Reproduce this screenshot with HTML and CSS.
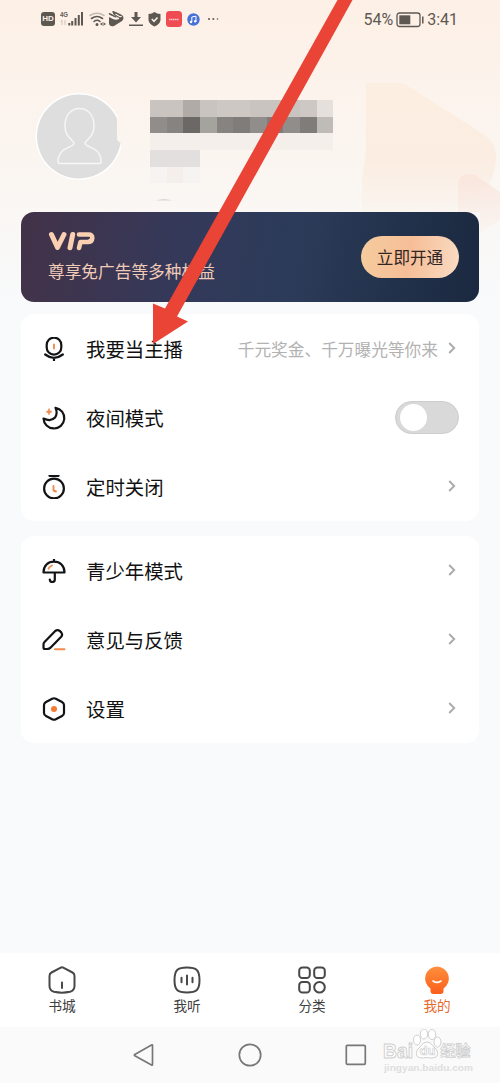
FILE: index.html
```html
<!DOCTYPE html>
<html lang="zh-CN">
<head>
<meta charset="utf-8">
<meta name="viewport" content="width=device-width, initial-scale=1">
<title>我的</title>
<link rel="stylesheet" href="styles.css">
</head>
<body>
<div class="screen">
  <svg class="decor" width="140" height="260" viewBox="360 70 140 260">
    <defs>
      <linearGradient id="peach" x1="0" y1="0" x2="0" y2="1"><stop offset="0" stop-color="#fceee1"/><stop offset=".6" stop-color="#fbede1"/><stop offset="1" stop-color="#faf5f0"/></linearGradient>
      <linearGradient id="rose" x1="0" y1="0" x2="0" y2="1"><stop offset="0" stop-color="#f9e3da"/><stop offset="1" stop-color="#faf3ef"/></linearGradient>
    </defs>
    <path fill="url(#peach)" d="M366 83H398Q403 83 408 86L483 134Q497 143 496 160Q494 180 484 191L452 212H362V182L366 150Z"/>
    <path fill="url(#rose)" opacity=".8" d="M458 203V185Q458 175 468 174Q474 174 478 177L500 192V220L480 232V212H458Z"/>
  </svg>

  <header class="status">
    <div class="status-icons">
      <span class="hd">HD</span>
      <svg width="24" height="18" viewBox="0 0 24 18"><text class="net" x="0" y="7" textLength="8" lengthAdjust="spacingAndGlyphs">4G</text><path d="M2 10v5M0.8 11.5L2 10M5 10v5" stroke="#cfc5bd" fill="none"/><path d="M9.3 13v2.500M12.200 11v4.500M15.500 8v7.500M18.800 5v10.500M22 2v13.500" stroke="#5e5852" stroke-width="2"/></svg>
      <svg width="17" height="16" viewBox="0 0 17 16" fill="none" stroke="#5e5852" stroke-width="1.600" stroke-linecap="round"><path stroke="#c3bbb3" d="M1 4.500Q8 0 15 4.500"/><path d="M2.500 7.500Q8 3.500 13.500 7.500M5 10.500Q8 8 11 10.500"/><circle cx="8" cy="13.500" r=".7"/><path d="M12 13h4M13 11.800L11.800 13 13 14.200M15 11.800L16.200 13 15 14.200" stroke-width="1"/></svg>
      <svg class="clip" width="16" height="16" viewBox="0 0 16 16"><path fill="#5e5852" d="M1 6L5 8Q9 9.500 11 7.500L5 3Q5 0 8 1L14 4Q17 7 14 10L6 15Q2 16 1 13Z"/><path d="M1.500 2.800L7.500 6M5 .8L11 4.500" stroke="#5e5852" fill="none" stroke-width="1.600" stroke-linecap="round"/><path d="M3.500 5.500L8 7.600Q10 8 11 7M7.500 3L11.500 5.500Q13 6 13.500 5" stroke="#fcf1e9" fill="none" stroke-width="1.100"/></svg>
      <svg width="14" height="16" viewBox="0 0 14 16"><path fill="#5e5852" d="M5.500 1h3v5h3.500L7 11.500 2 6h3.500zM0 13.500h14V15H0z"/></svg>
      <svg width="13" height="15" viewBox="0 0 13 15"><path fill="#5e5852" d="M6.500 0Q9 2 12.500 2V8Q12 12 6.500 14.500Q1 12 .5 8V2Q4 2 6.500 0Z"/><path d="M3.800 7l2.200 2.300L9.500 5.500" stroke="#fcf1e9" stroke-width="1.500" fill="none"/></svg>
      <svg width="16" height="16" viewBox="0 0 16 16"><rect width="16" height="16" rx="3.500" fill="#ee4b53"/><path d="M3 8.500h10" stroke="#fac4c4" stroke-width="1.500" stroke-dasharray="1.500 .4"/></svg>
      <svg width="13" height="13" viewBox="0 0 13 13"><circle cx="6.500" cy="6.500" r="6.200" fill="#4872d6"/><path d="M4.800 9V4L9 3.200V8" stroke="#fff" fill="none"/><circle cx="4" cy="9" r="1.200" fill="#fff"/><circle cx="8.200" cy="8.200" r="1.200" fill="#fff"/></svg>
      <svg class="more" width="12" height="4" viewBox="0 0 12 4" fill="#5e5852"><circle cx="2" cy="2" r="1"/><circle cx="6.300" cy="2" r="1"/><circle cx="10.500" cy="2" r=".8"/></svg>
    </div>
    <div class="status-right">
      <span>54%</span>
      <svg width="28" height="16" viewBox="0 0 28 16"><rect x="1" y="1" width="23" height="13.500" rx="2.500" fill="none" stroke="#5e5852" stroke-width="1.300"/><rect x="3.300" y="3.300" width="11" height="9" fill="#5e5852"/><path d="M26.800 4.500v7" stroke="#5e5852" stroke-width="1.500"/></svg>
      <span>3:41</span>
    </div>
  </header>

  <section class="profile">
    <svg class="avatar" width="90" height="90" viewBox="0 0 90 90"><path d="M82.500 24A43.500 43.500 0 1 0 86.500 54L82 48Z" fill="#fff"/><path d="M82 26.500A42 42 0 1 0 85.500 51L82 48Z" fill="#dedede"/><path fill="none" stroke="#f6f6f6" stroke-width="1.500" stroke-linejoin="round" d="M39 51C36 46 30 44 30 34C30 23 36 16.500 44.500 16.500S59 23 59 34C59 44 53 46 50 51C50 56 66 54 66 70Q66 71.500 64 71.500H25Q23 71.500 23 70C23 54 40 56 39 51Z"/></svg>
    <div class="mosaic">
      <i class="a"></i><i class="a"></i><i class="b"></i><i class="a"></i><i class="c"></i><i class="c"></i><i class="a"></i><i class="a"></i><i class="a"></i><i class="c"></i><i class="l"></i>
      <i class="d"></i><i class="e"></i><i class="f"></i><i class="g"></i><i class="e"></i><i class="h"></i><i class="d"></i><i class="h"></i><i class="d"></i><i class="h"></i><i class="i"></i>
      <i class="j"></i><i class="j"></i><i class="j"></i><i class="j"></i><i class="j"></i><i class="j"></i><i class="j"></i><i class="j"></i><i class="j"></i><i class="j"></i><i class="j"></i>
      <i class="k"></i><i class="k"></i><i class="k"></i><i></i><i></i><i></i><i></i><i></i><i></i><i></i><i></i>
      <i class="m"></i><i class="j"></i><i class="m"></i>
    </div>
    <svg class="trace" width="16" height="3" viewBox="0 0 16 3"><path d="M0 2.500Q8 -.5 16 2.500Z" fill="#d9d5d1"/></svg>
  </section>

  <section class="vip">
    <div class="vip-info">
      <svg width="50" height="22" viewBox="0 0 50 22" role="img" aria-label="VIP" fill="none" stroke="#fbd0b2" stroke-width="5" stroke-linecap="round" stroke-linejoin="round"><path d="M3.500 4.500L9.500 17.500 16 4.500M24.700 4.500L22 17.800"/><path d="M31 4.500H40.500Q44.500 4.500 44.300 8Q44 12 39.500 12H32.500L31 18" stroke-width="4.600"/></svg>
      <p>尊享免广告等多种权益</p>
    </div>
    <button class="open">立即开通</button>
  </section>

  <section class="card">
    <div class="row">
      <svg class="icon" viewBox="0 0 24 24"><rect x="4.700" y=".7" width="14.600" height="17" rx="7.200"/><path d="M3.200 17.500Q12 24.200 20.800 17.500M12 20.800V23.500"/><path class="o" d="M12 7.500v4"/></svg>
      <span class="label">我要当主播</span><span class="hint">千元奖金、千万曝光等你来</span>
      <svg class="chev" viewBox="0 0 8 12"><path d="M1.200 1L6.200 6 1.200 11"/></svg>
    </div>
    <div class="row">
      <svg class="icon" viewBox="0 0 24 24"><path d="M13.500 1.800A10.400 10.400 0 1 1 1.500 12.500Q9 16 13 11.500Q16 7.500 13.500 1.800Z"/><path class="o star" d="M7 2.800Q7.400 5.400 10 5.800Q7.400 6.200 7 8.800Q6.600 6.200 4 5.800Q6.600 5.400 7 2.800Z"/></svg>
      <span class="label">夜间模式</span><span class="switch"><span></span></span>
    </div>
    <div class="row">
      <svg class="icon" viewBox="0 0 24 24"><circle cx="12" cy="13.500" r="9.900"/><path d="M7.500 .8h9"/><path class="o" d="M11.500 11v4.500L14 16.500"/></svg>
      <span class="label">定时关闭</span>
      <svg class="chev" viewBox="0 0 8 12"><path d="M1.200 1L6.200 6 1.200 11"/></svg>
    </div>
  </section>

  <section class="card">
    <div class="row">
      <svg class="icon" viewBox="0 0 24 24"><path d="M1.500 13.500C1.500 6.500 6 2.700 12 2.700S22.500 6.500 22.500 13.500ZM12 .3V2.500M12.800 14V20.500Q12.800 23 10.300 23Q7.800 23 7.800 20.500"/><path class="o" d="M6.500 9.800Q7 7.800 10 6.500"/></svg>
      <span class="label">青少年模式</span>
      <svg class="chev" viewBox="0 0 8 12"><path d="M1.200 1L6.200 6 1.200 11"/></svg>
    </div>
    <div class="row">
      <svg class="icon" viewBox="0 0 24 24"><path d="M2.500 14L13 3.200Q15.500 1 17.700 2.900L19.200 4.400Q21 6.500 19.200 8.700L8.700 19.500Q7.500 21 5 21H3Q1.500 21 1.500 19.500V16.500Q1.500 15 2.500 14Z"/><path class="o" d="M13 21.300h9.500"/></svg>
      <span class="label">意见与反馈</span>
      <svg class="chev" viewBox="0 0 8 12"><path d="M1.200 1L6.200 6 1.200 11"/></svg>
    </div>
    <div class="row">
      <svg class="icon" viewBox="0 0 24 24"><path d="M10.200 1.700Q12 .8 13.800 1.700L20 5Q22 6.100 22 8V16Q22 17.900 20 19L13.800 22.300Q12 23.200 10.200 22.300L4 19Q2 17.900 2 16V8Q2 6.100 4 5Z"/><circle class="dot" cx="12" cy="12" r="3"/></svg>
      <span class="label">设置</span>
      <svg class="chev" viewBox="0 0 8 12"><path d="M1.200 1L6.200 6 1.200 11"/></svg>
    </div>
  </section>

  <nav class="tabs">
    <a class="tab"><svg viewBox="0 0 28 28"><path d="M12.300 1.800Q14 .9 15.700 1.800L24.500 6.500Q26.500 7.600 26.500 10V20Q26.500 24.500 22 25.800Q14 27.500 6 25.800Q1.500 24.500 1.500 20V10Q1.500 7.600 3.500 6.500ZM14 16.500v5.500"/></svg>书城</a>
    <a class="tab"><svg viewBox="0 0 28 28"><path d="M14 1.500C23.500 1.500 26.500 4 26.500 14S23.500 26.500 14 26.500 1.500 24 1.500 14 4.500 1.500 14 1.500ZM8.500 11.800v4.500M14 9.500v9M19.500 11.800v4.500"/></svg>我听</a>
    <a class="tab"><svg viewBox="0 0 28 28"><rect x="1.200" y="1.500" width="10.600" height="10.600" rx="3.200"/><rect x="16.200" y="1.500" width="10.600" height="10.600" rx="3.200"/><rect x="1.200" y="16" width="10.600" height="10.600" rx="3.200"/><circle cx="21.500" cy="21.300" r="5.300"/></svg>分类</a>
    <a class="tab active"><svg viewBox="0 0 28 28"><defs><linearGradient id="face" x1="0" y1="0" x2="0" y2="1"><stop offset="0" stop-color="#ff8f3c"/><stop offset="1" stop-color="#fb5e1c"/></linearGradient></defs><path class="face" d="M14 .500A12 12 0 0 1 20.500 22.500V25Q20.500 28 17.500 28H10.500Q7.500 28 7.500 25V22.500A12 12 0 0 1 14 .500Z"/><path class="smile" d="M10 15Q14 17.800 18 15"/></svg>我的</a>
  </nav>

  <footer class="sysnav">
    <svg viewBox="0 0 24 24"><path d="M20.500 2.500V21.500Q20.500 22.500 19.500 22L2.800 12.700Q1.800 12 2.800 11.400L19.500 2Q20.500 1.500 20.500 2.500Z"/></svg>
    <svg viewBox="0 0 24 24"><circle cx="12" cy="12" r="10.700"/></svg>
    <svg viewBox="0 0 24 24"><rect x="2.300" y="2.300" width="19" height="19" rx="1"/></svg>
  </footer>

  <svg class="watermark" width="100" height="50" viewBox="0 0 100 50">
    <g fill="#fff" stroke="#cfcfcf" stroke-width="1">
      <text x="2" y="28.500" class="wm-big" textLength="30" lengthAdjust="spacingAndGlyphs">Bai</text>
      <ellipse cx="36" cy="11" rx="3.500" ry="5"/><ellipse cx="43" cy="5" rx="3.700" ry="5"/><ellipse cx="51" cy="5.500" rx="3.700" ry="5"/><ellipse cx="56.500" cy="13" rx="3.500" ry="5"/>
      <path d="M46 13Q50 13 53 18Q58 22 56 27Q53 30 46 28.500Q38 30 36 27Q34 22 39 18Q42 13 46 13Z"/>
      <text x="38.500" y="26" class="wm-du">du</text>
      <text x="59.500" y="27" class="wm-cn">经验</text>
    </g>
    <text x="3" y="41.500" class="wm-url" textLength="89" lengthAdjust="spacingAndGlyphs">jingyan.baidu.com</text>
  </svg>

  <svg class="arrow" width="500" height="360" viewBox="0 0 500 360"><path fill="#e94436" d="M337.500 0H352.500L177 316.500 188 321.500 153 344V303.500L165 308.500Z"/></svg>
</div>
</body>
</html>
```
FILE: styles.css
```css
* { box-sizing: border-box; }
body {
  margin: 0;
  font-family: "Liberation Sans", "Noto Sans CJK SC", sans-serif;
}
.screen {
  position: relative;
  width: 500px;
  height: 1083px;
  overflow: hidden;
  display: flex;
  flex-direction: column;
  background: linear-gradient(#fdf0e6 0, #fcf3ec 90px, #faf7f4 212px, #f8fafc 310px, #f8fafc 100%);
}
.screen svg { flex: none; display: block; }
.decor { position: absolute; right: 0; top: 70px; }
.status, .profile, .vip, .card { position: relative; }

.status {
  height: 38px;
  padding: 0 42px 0 41px;
  display: flex;
  align-items: center;
  justify-content: space-between;
  color: #5e5852;
}
.status-icons { display: flex; align-items: center; gap: 5px; }
.status-icons .clip { margin-left: -3px; }
.status-icons .more { margin-left: 2px; }
.hd {
  width: 14px;
  height: 14px;
  border-radius: 3px;
  background: #5e5852;
  color: #fcf1e9;
  font: bold 8px/14px "Liberation Sans", sans-serif;
  text-align: center;
}
.net { font: bold 7px "Liberation Sans", sans-serif; fill: #5e5852; }
.status-right {
  display: flex;
  align-items: center;
  gap: 3px;
  padding-top: 1px;
  font: 16px/20px Roboto, sans-serif;
}

.profile {
  height: 174px;
  display: flex;
  align-items: flex-start;
  padding: 54px 0 0 35px;
}
.mosaic {
  display: grid;
  grid-template-columns: repeat(11, 16.67px);
  grid-auto-rows: 16.67px;
  margin: 8px 0 0 25px;
}
.mosaic .a { background: #c9c4bf; }
.mosaic .b { background: #b0aba7; }
.mosaic .c { background: #cdc8c4; }
.mosaic .d { background: #918d8a; }
.mosaic .e { background: #868380; }
.mosaic .f { background: #6b6866; }
.mosaic .g { background: #a5a39e; }
.mosaic .h { background: #7f7c79; }
.mosaic .i { background: #bfbbb7; }
.mosaic .j { background: #f4efeb; }
.mosaic .k { background: #e3dfde; }
.mosaic .l { background: #e5e0dc; }
.mosaic .m { background: #f7f3f0; }
.trace { position: absolute; left: 156px; top: 160px; }

.vip {
  height: 90px;
  margin: 0 21px;
  padding: 0 21px 0 27px;
  border-radius: 13px;
  display: flex;
  justify-content: space-between;
  align-items: center;
  background: linear-gradient(100deg, #433248 0%, #34395a 36%, #2b3b59 60%, #1a293f 100%);
}
.vip-info { display: flex; flex-direction: column; gap: 9px; padding-top: 1px; }
.vip p { margin: 0; font-size: 16.700px; line-height: 24px; color: #f1cbb8; }
.open {
  width: 98px;
  height: 42px;
  margin-right: -1px;
  padding: 0;
  border: 0;
  border-radius: 21px;
  font: 16.600px/42px "Noto Sans CJK SC", sans-serif;
  color: #30251f;
  background: linear-gradient(100deg, #f5cc9d, #f6be98 50%, #f9dcc4);
}

.card {
  margin: 12px 21px 0;
  border-radius: 13px;
  background: #fff;
}
.card + .card { margin-top: 15px; }
.row {
  height: 69px;
  padding: 0 23px 0 21px;
  display: flex;
  align-items: center;
}
.icon {
  width: 24px;
  height: 24px;
  margin-right: 20px;
  fill: none;
  stroke: #111315;
  stroke-width: 2.200;
  stroke-linecap: round;
  stroke-linejoin: round;
}
.icon .o { stroke: #f08a4d; stroke-width: 1.900; }
.icon .star { fill: #f08a4d; stroke-width: .6; }
.icon .dot { fill: #f47d36; stroke: none; }
.label { font-size: 19.400px; line-height: 28px; padding-top: 2px; color: #111; margin-right: auto; }
.hint { font-size: 16.700px; color: #b2b2b2; margin-right: 10px; }
.chev { width: 8px; height: 12px; margin-top: -1px; fill: none; stroke: #aaa; stroke-width: 1.900; }
.switch {
  width: 64px;
  height: 33px;
  margin-right: -3px;
  padding: 2px 4px;
  border: 1px solid #cdcdcd;
  border-radius: 17px;
  background: #d9d9d9;
}
.switch span { display: block; width: 27px; height: 27px; border-radius: 50%; background: #fff; }

.tabs { height: 74px; margin-top: auto; background: #fff; display: flex; }
.tab {
  flex: 1;
  display: flex;
  flex-direction: column;
  align-items: center;
  padding: 13px 1px 0 0;
  font-size: 13.600px;
  line-height: 20px;
  color: #404040;
}
.tab svg {
  width: 28px;
  height: 28px;
  margin-bottom: 3px;
  fill: none;
  stroke: #484848;
  stroke-width: 2;
  stroke-linecap: round;
  stroke-linejoin: round;
}
.tab.active { color: #e8692d; }
.tab .face { fill: url(#face); stroke: none; }
.tab .smile { stroke: #fff; stroke-width: 1.600; }

.sysnav {
  height: 56px;
  background: #fafafa;
  display: flex;
  align-items: center;
  justify-content: center;
  gap: 82px;
}
.sysnav svg { width: 24px; height: 24px; fill: none; stroke: #777; stroke-width: 1.700; }

.watermark { position: absolute; left: 381px; top: 1029px; }
.wm-big { font: bold 21px "Liberation Sans", sans-serif; }
.wm-du { font: bold 13px "Liberation Sans", sans-serif; stroke-width: .7px; }
.wm-cn { font: bold 15px "Noto Sans CJK SC", sans-serif; stroke-width: .8px; }
.wm-url { font: bold 9px "Liberation Sans", sans-serif; fill: #dedede; }
.arrow { position: absolute; left: 0; top: 0; }
```
